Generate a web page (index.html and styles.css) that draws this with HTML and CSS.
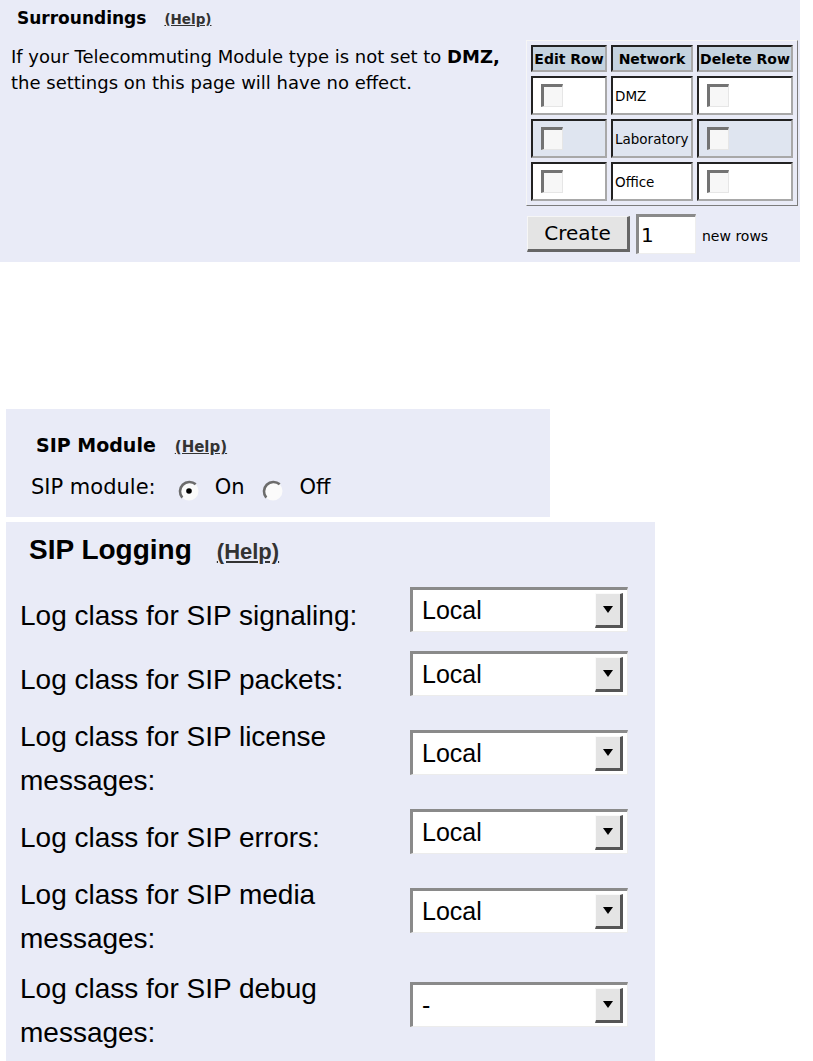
FILE: index.html
```html
<!DOCTYPE html>
<html lang="en">
<head>
<meta charset="utf-8">
<title>Surroundings / SIP</title>
<link rel="stylesheet" href="styles.css">
</head>
<body>
<section class="panel surr">
  <h2 class="surr-title">Surroundings<a class="help help-s" href="#">(Help)</a></h2>
  <div class="surr-body">
    <p class="note">If your Telecommuting Module type is not set to <b>DMZ,</b><br>the settings on this page will have no effect.</p>
    <div class="tblcol">
      <table class="grid">
        <thead>
          <tr><th class="c1">Edit Row</th><th class="c2">Network</th><th class="c3">Delete Row</th></tr>
        </thead>
        <tbody>
          <tr><td><span class="chk"></span></td><td class="name">DMZ</td><td><span class="chk"></span></td></tr>
          <tr class="alt"><td><span class="chk"></span></td><td class="name">Laboratory</td><td><span class="chk"></span></td></tr>
          <tr><td><span class="chk"></span></td><td class="name">Office</td><td><span class="chk"></span></td></tr>
        </tbody>
      </table>
      <div class="create-row">
        <span class="btn">Create</span>
        <span class="num">1</span>
        <span class="newrows">new rows</span>
      </div>
    </div>
  </div>
</section>

<section class="panel sipmod">
  <h2 class="sip-title">SIP Module<a class="help help-m" href="#">(Help)</a></h2>
  <div class="sip-row">
    <span class="rlabel">SIP module:</span>
    <svg class="radio r-on" width="22" height="22" viewBox="0 0 22 22"><circle cx="11" cy="11" r="9.5" fill="#fbfbfb"/><path d="M4.3 17.7 A9.5 9.5 0 0 1 17.7 4.3" fill="none" stroke="#6c6c6c" stroke-width="2.6"/><circle cx="11" cy="11" r="2.8" fill="#000"/></svg>
    <span class="ropt">On</span>
    <svg class="radio r-off" width="22" height="22" viewBox="0 0 22 22"><circle cx="11" cy="11" r="9.5" fill="#fbfbfb"/><path d="M4.3 17.7 A9.5 9.5 0 0 1 17.7 4.3" fill="none" stroke="#6c6c6c" stroke-width="2.6"/></svg>
    <span class="ropt">Off</span>
  </div>
</section>

<section class="panel siplog">
  <h2 class="log-title">SIP Logging<a class="help help-l" href="#">(Help)</a></h2>
  <div class="logrows">
    <div class="logrow"><span class="llabel">Log class for SIP signaling:</span><div class="sel"><span class="sel-val">Local</span><span class="sel-btn"><svg width="10" height="7" viewBox="0 0 10 7"><polygon points="0,0 10,0 5,7" fill="#000"/></svg></span></div></div>
    <div class="logrow"><span class="llabel">Log class for SIP packets:</span><div class="sel"><span class="sel-val">Local</span><span class="sel-btn"><svg width="10" height="7" viewBox="0 0 10 7"><polygon points="0,0 10,0 5,7" fill="#000"/></svg></span></div></div>
    <div class="logrow"><span class="llabel">Log class for SIP license messages:</span><div class="sel"><span class="sel-val">Local</span><span class="sel-btn"><svg width="10" height="7" viewBox="0 0 10 7"><polygon points="0,0 10,0 5,7" fill="#000"/></svg></span></div></div>
    <div class="logrow"><span class="llabel">Log class for SIP errors:</span><div class="sel"><span class="sel-val">Local</span><span class="sel-btn"><svg width="10" height="7" viewBox="0 0 10 7"><polygon points="0,0 10,0 5,7" fill="#000"/></svg></span></div></div>
    <div class="logrow"><span class="llabel">Log class for SIP media messages:</span><div class="sel"><span class="sel-val">Local</span><span class="sel-btn"><svg width="10" height="7" viewBox="0 0 10 7"><polygon points="0,0 10,0 5,7" fill="#000"/></svg></span></div></div>
    <div class="logrow"><span class="llabel">Log class for SIP debug messages:</span><div class="sel"><span class="sel-val">-</span><span class="sel-btn"><svg width="10" height="7" viewBox="0 0 10 7"><polygon points="0,0 10,0 5,7" fill="#000"/></svg></span></div></div>
  </div>
</section>
</body>
</html>
```

FILE: styles.css
```css
* { box-sizing: border-box; }

html, body { margin: 0; padding: 0; background: #fff; }

body {
  font-family: "DejaVu Sans", sans-serif;
  color: #000;
  overflow: hidden;
}

.panel { background: #e9ebf7; }

.help {
  color: #333;
  text-decoration: underline;
  font-weight: bold;
}

/* ---------- Surroundings ---------- */
.surr {
  width: 800px;
  height: 262px;
  padding: 6px 0 0 11px;
}

.surr-title {
  margin: 0 0 0 6px;
  font-size: 17px;
  font-weight: bold;
  line-height: 24px;
  height: 24px;
}

.help-s { font-size: 13.5px; margin-left: 18px; }

.surr-body {
  display: flex;
  align-items: flex-start;
  margin-top: 10px;
}

.note {
  margin: 4px 0 0;
  width: 515px;
  font-size: 18px;
  line-height: 26px;
}

.tblcol { display: flex; flex-direction: column; }

.grid {
  border-collapse: separate;
  border-spacing: 4px;
  border: 1px solid;
  border-color: #f6f6f6 #7c7c7c #7c7c7c #f6f6f6;
}

.grid th, .grid td {
  border: 2px solid;
  border-color: #222 #a8a8a8 #a8a8a8 #222;
  padding: 0;
}

.grid th {
  height: 27px;
  background: #c5d3df;
  font-size: 14px;
  font-weight: bold;
  text-align: center;
  white-space: nowrap;
}

.grid .c1 { width: 76px; }
.grid .c2 { width: 82px; }
.grid .c3 { width: 96px; }

.grid td {
  height: 39px;
  background: #fff;
  vertical-align: middle;
}

.grid .alt td { background: #dfe5f0; }

.grid .name {
  font-size: 13.5px;
  padding-left: 2px;
}

.chk {
  display: block;
  width: 22px;
  height: 23px;
  margin-left: 8px;
  border-top: 3px solid #737373;
  border-left: 3px solid #737373;
  border-right: 1px solid #e6e6e6;
  border-bottom: 1px solid #e6e6e6;
  background: #f7f7f7;
}

.create-row {
  display: flex;
  align-items: center;
  margin-top: 8px;
  padding-left: 1px;
}

.btn {
  width: 103px;
  height: 36px;
  display: flex;
  align-items: center;
  justify-content: center;
  font-size: 20px;
  background: #e4e4e4;
  border-style: solid;
  border-width: 1px 3px 3px 1px;
  border-color: #f6f6f6 #666 #666 #f6f6f6;
}

.num {
  width: 60px;
  height: 40px;
  margin-left: 6px;
  padding-left: 2px;
  display: flex;
  align-items: center;
  font-size: 20px;
  background: #fff;
  border-top: 3px solid #8a8a8a;
  border-left: 3px solid #8a8a8a;
  border-right: 1px solid #eee;
  border-bottom: 1px solid #eee;
}

.newrows {
  margin-left: 6px;
  font-size: 14px;
  padding-top: 4px;
}

/* ---------- SIP Module ---------- */
.sipmod {
  width: 544px;
  height: 108px;
  margin: 147px 0 0 6px;
  padding: 22px 0 0 25px;
}

.sip-title {
  margin: 0 0 0 5px;
  font-size: 19px;
  font-weight: bold;
  line-height: 28px;
}

.help-m { font-size: 15px; margin-left: 19px; }

.sip-row {
  display: flex;
  align-items: center;
  margin-top: 11px;
  font-size: 21px;
  line-height: 28px;
}

.radio { display: block; margin-top: 8px; }
.r-on { margin-left: 22px; }
.r-off { margin-left: 18px; }
.ropt { margin-left: 15px; }

/* ---------- SIP Logging ---------- */
.siplog {
  width: 649px;
  height: 539px;
  margin: 5px 0 0 6px;
  padding: 11px 0 0 14px;
  font-family: "Liberation Sans", Arial, sans-serif;
}

.log-title {
  margin: 0 0 0 9px;
  font-size: 28px;
  font-weight: bold;
  line-height: 34px;
}

.help-l { font-size: 22px; margin-left: 25px; }

.logrows {
  display: flex;
  flex-direction: column;
  gap: 6px;
  margin-top: 18px;
}

.logrow {
  display: flex;
  align-items: center;
}

.llabel {
  width: 390px;
  font-size: 28px;
  line-height: 44px;
  padding-right: 20px;
}

.sel {
  width: 218px;
  height: 45px;
  margin-bottom: 13px;
  display: flex;
  align-items: center;
  padding-left: 9px;
  background: #fff;
  border-top: 3px solid #8a8a8a;
  border-left: 3px solid #8a8a8a;
  border-right: 1px solid #ececec;
  border-bottom: 1px solid #ececec;
}

.sel-val { font-size: 25px; }

.sel-btn {
  margin-left: auto;
  margin-right: 4px;
  width: 28px;
  height: 35px;
  display: flex;
  align-items: center;
  justify-content: center;
  background: #e4e4e4;
  border-style: solid;
  border-width: 1px 3px 3px 1px;
  border-color: #fafafa #555 #555 #fafafa;
}

.sel-btn svg { display: block; }
```
